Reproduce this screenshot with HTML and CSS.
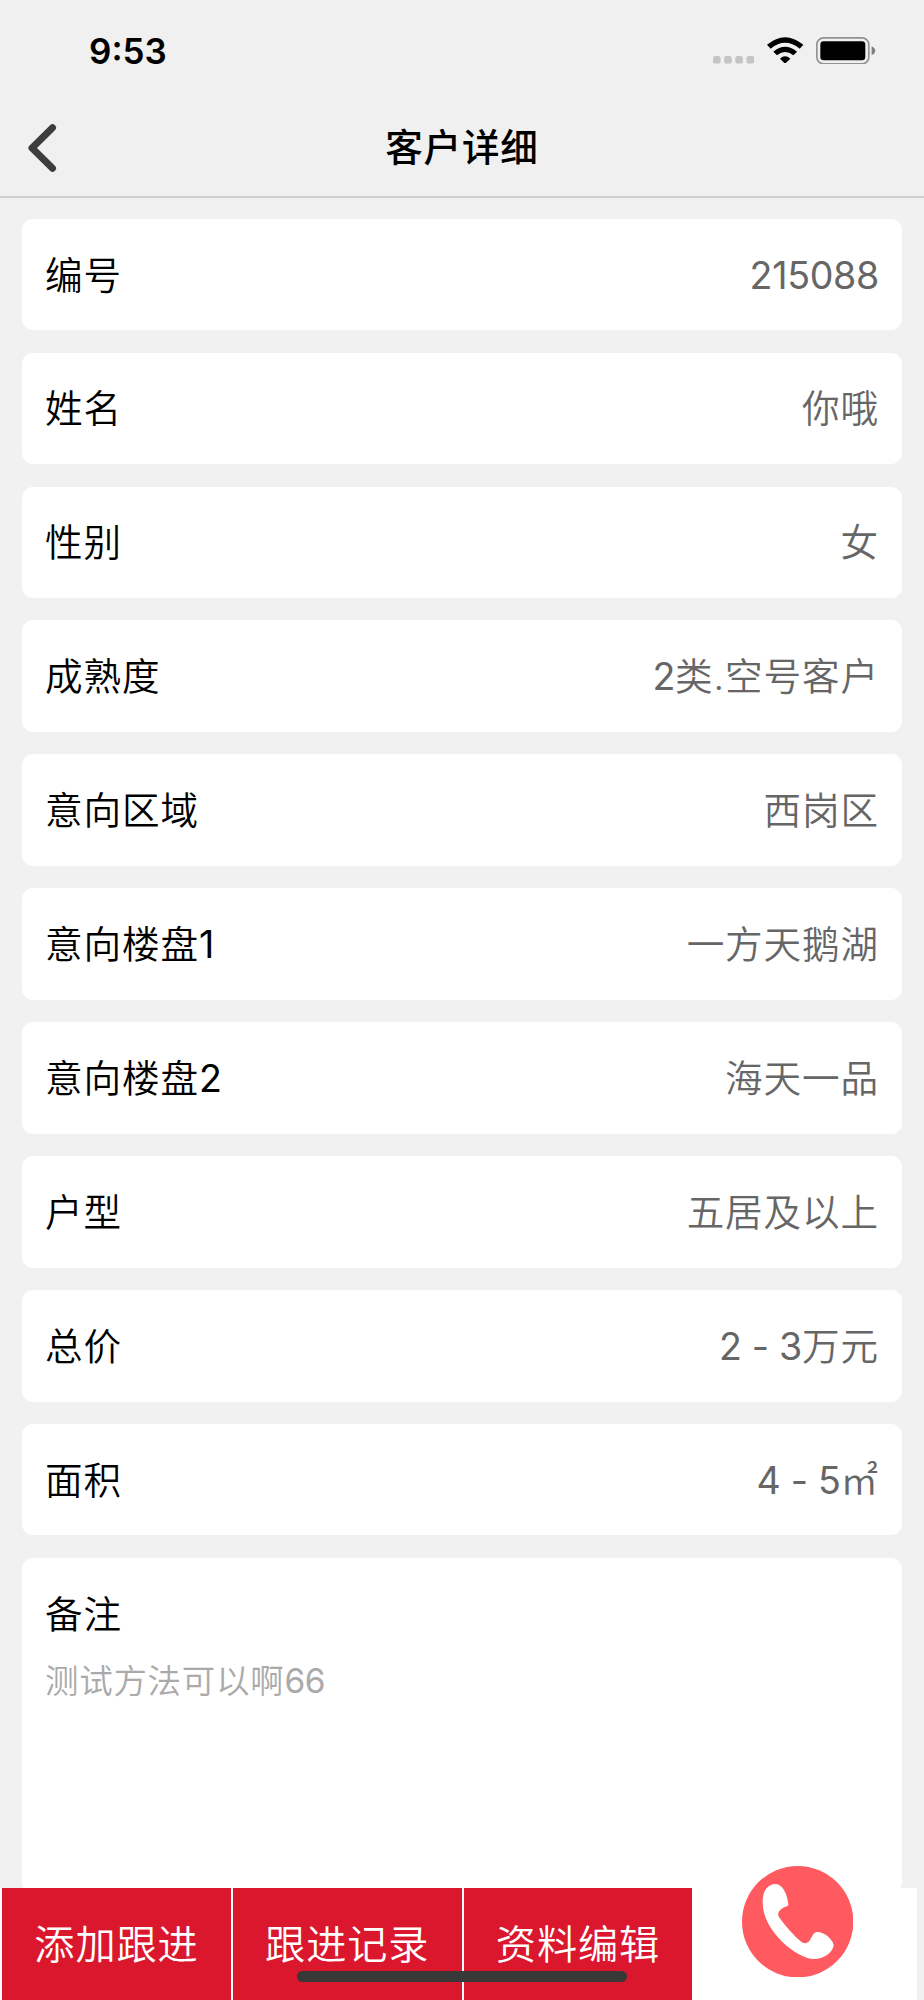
FILE: index.html
```html
<!DOCTYPE html>
<html lang="zh-CN">
<head>
<meta charset="utf-8">
<title>客户详细</title>
<link rel="stylesheet" href="styles.css">
</head>
<body>
<div class="screen">
  <div class="status">
    <span class="time">9:53</span>
    <div class="indicators">
      <svg class="signal" viewBox="0 0 41 8"><g fill="#c4c4c4"><rect width="7.6" height="7.6" rx="2.2"/><rect x="11.2" width="7.6" height="7.6" rx="2.2"/><rect x="22.3" width="7.6" height="7.6" rx="2.2"/><rect x="33.5" width="7.6" height="7.6" rx="2.2"/></g></svg>
      <svg class="wifi" viewBox="233 50 109 80"><path d="M233 73Q287 28 342 73L331 85Q287 50 244 85ZM252 94Q287 64 323 94L312 105Q287 85 263 105ZM272 115Q287 101 303 115L287 130Z"/></svg>
      <svg class="battery" viewBox="380 49 178 83"><rect x="382.5" y="51.5" width="156" height="78" rx="20" fill="none" stroke="#929292" stroke-width="5"/><rect x="393" y="62" width="135" height="57" rx="10"/><path d="M547 77Q558 82 558 90.5T547 104Z" fill="#808080"/></svg>
    </div>
  </div>
  <header class="nav">
    <svg class="back" viewBox="0 0 30 50"><path d="M25.5 4.8L5 25L25.5 45.2" fill="none" stroke="#3d3d3d" stroke-width="7" stroke-linecap="round" stroke-linejoin="round"/></svg>
    <h1 class="title">客户详细</h1>
  </header>
  <main class="list">
    <div class="card"><span>编号</span><span class="value"><span class="num">215088</span></span></div>
    <div class="card"><span>姓名</span><span class="value">你哦</span></div>
    <div class="card"><span>性别</span><span class="value">女</span></div>
    <div class="card"><span>成熟度</span><span class="value"><span class="num">2</span>类.空号客户</span></div>
    <div class="card"><span>意向区域</span><span class="value">西岗区</span></div>
    <div class="card"><span>意向楼盘<span class="num">1</span></span><span class="value">一方天鹅湖</span></div>
    <div class="card"><span>意向楼盘<span class="num">2</span></span><span class="value">海天一品</span></div>
    <div class="card"><span>户型</span><span class="value">五居及以上</span></div>
    <div class="card"><span>总价</span><span class="value"><span class="num">2 - 3</span>万元</span></div>
    <div class="card"><span>面积</span><span class="value"><span class="num">4 - 5</span>㎡</span></div>
    <div class="card note"><span class="note-title">备注</span><p class="note-text">测试方法可以啊<span class="num">66</span></p></div>
  </main>
  <footer class="actions">
    <div class="action">添加跟进</div>
    <div class="action">跟进记录</div>
    <div class="action">资料编辑</div>
    <div class="call-slot">
      <svg class="call" viewBox="125 78 334 334"><circle cx="292" cy="245" r="167" fill="#ff5a60"/><path fill="#fff" d="M187 188C186 151 203 132 226 132C246 132 262 163 264 195C262 200 252 199 243 207C233 215 230 224 238 234C255 258 280 286 300 303C308 311 319 312 327 303C335 292 338 277 350 276C369 275 398 297 400 316C397 340 366 358 340 357C292 356 187 275 187 188Z"/></svg>
    </div>
    <div class="home-bar"></div>
  </footer>
</div>
</body>
</html>
```

FILE: styles.css
```css
* { box-sizing: border-box; }
body {
  margin: 0;
  background: #f1f1f1;
  color: #000;
  font-family: Inter, "Noto Sans CJK SC", sans-serif;
  font-weight: 350;
}
.screen {
  display: flex;
  flex-direction: column;
  width: 924px;
  height: 2000px;
  overflow: hidden;
}
.status {
  display: flex;
  flex: none;
  justify-content: space-between;
  height: 98px;
  padding: 36px 48.3px 0 89px;
  background: #f0f0f0;
}
.time {
  font-size: 35px;
  line-height: 30px;
  font-weight: 600;
}
.indicators {
  display: flex;
  align-items: flex-start;
}
.signal { width: 41px; height: 8px; margin: 20px 13px 0 0; }
.wifi { width: 36.4px; height: 26.7px; margin: .5px 12.6px 0 0; }
.battery { width: 59.3px; height: 27.7px; margin-top: .5px; }
.nav {
  display: grid;
  flex: none;
  grid-template-columns: 100px 1fr 100px;
  align-items: center;
  height: 100px;
  background: #f0f0f0;
  border-bottom: 2px solid #cfcfcf;
}
.back { width: 30px; height: 50px; margin: 1px 0 0 27px; }
.title {
  margin: 0;
  padding-top: 2px;
  text-align: center;
  font-size: 37.6px;
  line-height: 56px;
  font-weight: 500;
  letter-spacing: .8px;
}
.list {
  display: flex;
  flex: none;
  flex-direction: column;
  gap: 22.3px;
  height: 1690px;
  padding: 20.8px 22.3px 0;
  overflow: hidden;
}
.card {
  display: flex;
  flex: none;
  justify-content: space-between;
  align-items: center;
  height: 111.6px;
  padding: 2px 22.7px 0;
  border-radius: 11px;
  background: #fff;
  font-size: 37.6px;
  line-height: 56px;
  letter-spacing: .9px;
}
.value { color: #666; }
.num { font-weight: 400; letter-spacing: -.3px; }
.note {
  flex-direction: column;
  align-items: flex-start;
  justify-content: flex-start;
  height: 335px;
  padding-top: 29px;
}
.note-text {
  margin: 12px 0 0;
  color: #aaa;
  font-size: 33.5px;
  line-height: 52px;
  letter-spacing: .7px;
}
.actions {
  position: relative;
  display: grid;
  flex: none;
  grid-template-columns: repeat(3, 228.6px) 1fr;
  gap: 2.2px;
  width: 917px;
  height: 112px;
  padding-left: 2.2px;
  background: #fff;
}
.action {
  padding-top: 27px;
  text-align: center;
  background: #da172d;
  color: #fff;
  font-size: 40.2px;
  line-height: 60px;
  letter-spacing: .9px;
}
.call-slot { position: relative; }
.call {
  position: absolute;
  top: -22px;
  left: 47px;
  width: 111.4px;
  height: 111.4px;
}
.home-bar {
  position: absolute;
  left: 297px;
  top: 83px;
  width: 330px;
  height: 11px;
  border-radius: 6px;
  background: #383838;
}
```
